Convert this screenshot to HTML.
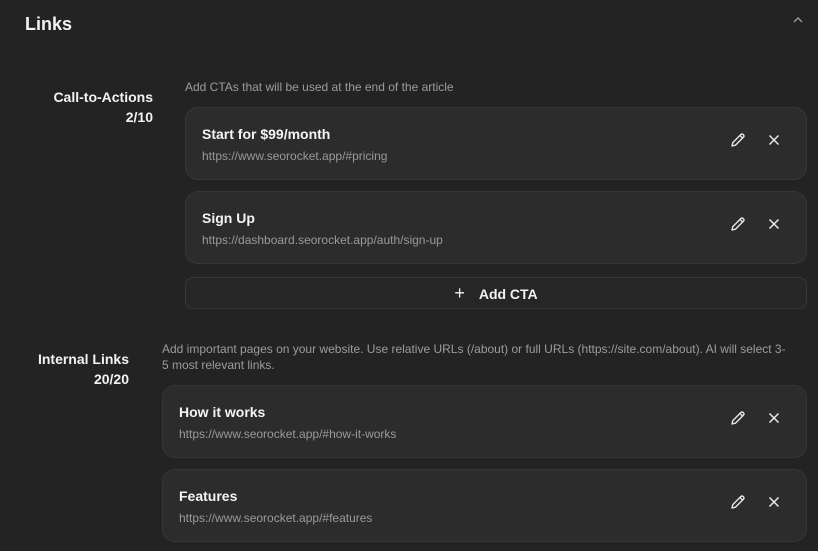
<!DOCTYPE html>
<html><head><style>
*{margin:0;padding:0;box-sizing:border-box}
body{width:818px;height:551px;background:#232323;font-family:"Liberation Sans",sans-serif;position:relative;overflow:hidden;color:#f2f2f2}
.a{position:absolute;white-space:nowrap}
.h{left:25px;top:14px;font-size:18px;font-weight:bold}
.lab{font-size:14px;font-weight:bold;text-align:right;line-height:20px}
.desc{font-size:12px;color:#9c9c9c;line-height:16px}
.card{position:absolute;background:#2c2c2c;border:1px solid #363636;border-radius:13px;height:73px}
.card .t{position:absolute;left:16px;top:18px;font-size:14px;font-weight:bold;color:#f4f4f4}
.card .u{position:absolute;left:16px;top:41px;font-size:12px;color:#9a9a9a}
.card svg{position:absolute;top:23px}
.btn{position:absolute;left:185px;top:277px;width:622px;height:32px;border:1px solid #383838;border-radius:8px;background:#262626;font-size:14px;font-weight:bold;text-align:center;line-height:30px}
</style></head><body>
<div class="a h">Links</div>
<svg class="a" style="left:792px;top:15px" width="12" height="10" viewBox="0 0 12 10"><path d="M2 7L6 3L10 7" stroke="#9a9a9a" stroke-width="1.4" fill="none"/></svg>

<div class="a lab" style="right:665px;top:87px">Call-to-Actions<br>2/10</div>
<div class="a desc" style="left:185px;top:79px">Add CTAs that will be used at the end of the article</div>

<div class="card" style="left:185px;top:107px;width:622px">
<div class="t">Start for $99/month</div><div class="u">https://www.seorocket.app/#pricing</div>
<svg style="left:543px" width="18" height="18" viewBox="0 0 18 18"><path d="M3 15L3.8 11.6L12 3.4Q13 2.6 14 3.4L14.6 4Q15.4 5 14.6 6L6.4 14.2Z M11 4.5L13.5 7" stroke="#e8e8e8" stroke-width="1.4" fill="none" stroke-linejoin="round"/></svg>
<svg style="left:579px" width="18" height="18" viewBox="0 0 18 18"><path d="M4.5 4.5L13.5 13.5M13.5 4.5L4.5 13.5" stroke="#e8e8e8" stroke-width="1.5"/></svg>
</div>
<div class="card" style="left:185px;top:191px;width:622px">
<div class="t">Sign Up</div><div class="u">https://dashboard.seorocket.app/auth/sign-up</div>
<svg style="left:543px" width="18" height="18" viewBox="0 0 18 18"><path d="M3 15L3.8 11.6L12 3.4Q13 2.6 14 3.4L14.6 4Q15.4 5 14.6 6L6.4 14.2Z M11 4.5L13.5 7" stroke="#e8e8e8" stroke-width="1.4" fill="none" stroke-linejoin="round"/></svg>
<svg style="left:579px" width="18" height="18" viewBox="0 0 18 18"><path d="M4.5 4.5L13.5 13.5M13.5 4.5L4.5 13.5" stroke="#e8e8e8" stroke-width="1.5"/></svg>
</div>
<div class="btn"><span style="font-weight:normal;font-size:18px;margin-right:14px">+</span>Add CTA</div>

<div class="a lab" style="right:689px;top:349px">Internal Links<br>20/20</div>
<div class="a desc" style="left:162px;top:341px">Add important pages on your website. Use relative URLs (/about) or full URLs (https://site.com/about). AI will select 3-<br>5 most relevant links.</div>

<div class="card" style="left:162px;top:385px;width:645px">
<div class="t">How it works</div><div class="u">https://www.seorocket.app/#how-it-works</div>
<svg style="left:566px" width="18" height="18" viewBox="0 0 18 18"><path d="M3 15L3.8 11.6L12 3.4Q13 2.6 14 3.4L14.6 4Q15.4 5 14.6 6L6.4 14.2Z M11 4.5L13.5 7" stroke="#e8e8e8" stroke-width="1.4" fill="none" stroke-linejoin="round"/></svg>
<svg style="left:602px" width="18" height="18" viewBox="0 0 18 18"><path d="M4.5 4.5L13.5 13.5M13.5 4.5L4.5 13.5" stroke="#e8e8e8" stroke-width="1.5"/></svg>
</div>
<div class="card" style="left:162px;top:469px;width:645px">
<div class="t">Features</div><div class="u">https://www.seorocket.app/#features</div>
<svg style="left:566px" width="18" height="18" viewBox="0 0 18 18"><path d="M3 15L3.8 11.6L12 3.4Q13 2.6 14 3.4L14.6 4Q15.4 5 14.6 6L6.4 14.2Z M11 4.5L13.5 7" stroke="#e8e8e8" stroke-width="1.4" fill="none" stroke-linejoin="round"/></svg>
<svg style="left:602px" width="18" height="18" viewBox="0 0 18 18"><path d="M4.5 4.5L13.5 13.5M13.5 4.5L4.5 13.5" stroke="#e8e8e8" stroke-width="1.5"/></svg>
</div>
</body></html>
